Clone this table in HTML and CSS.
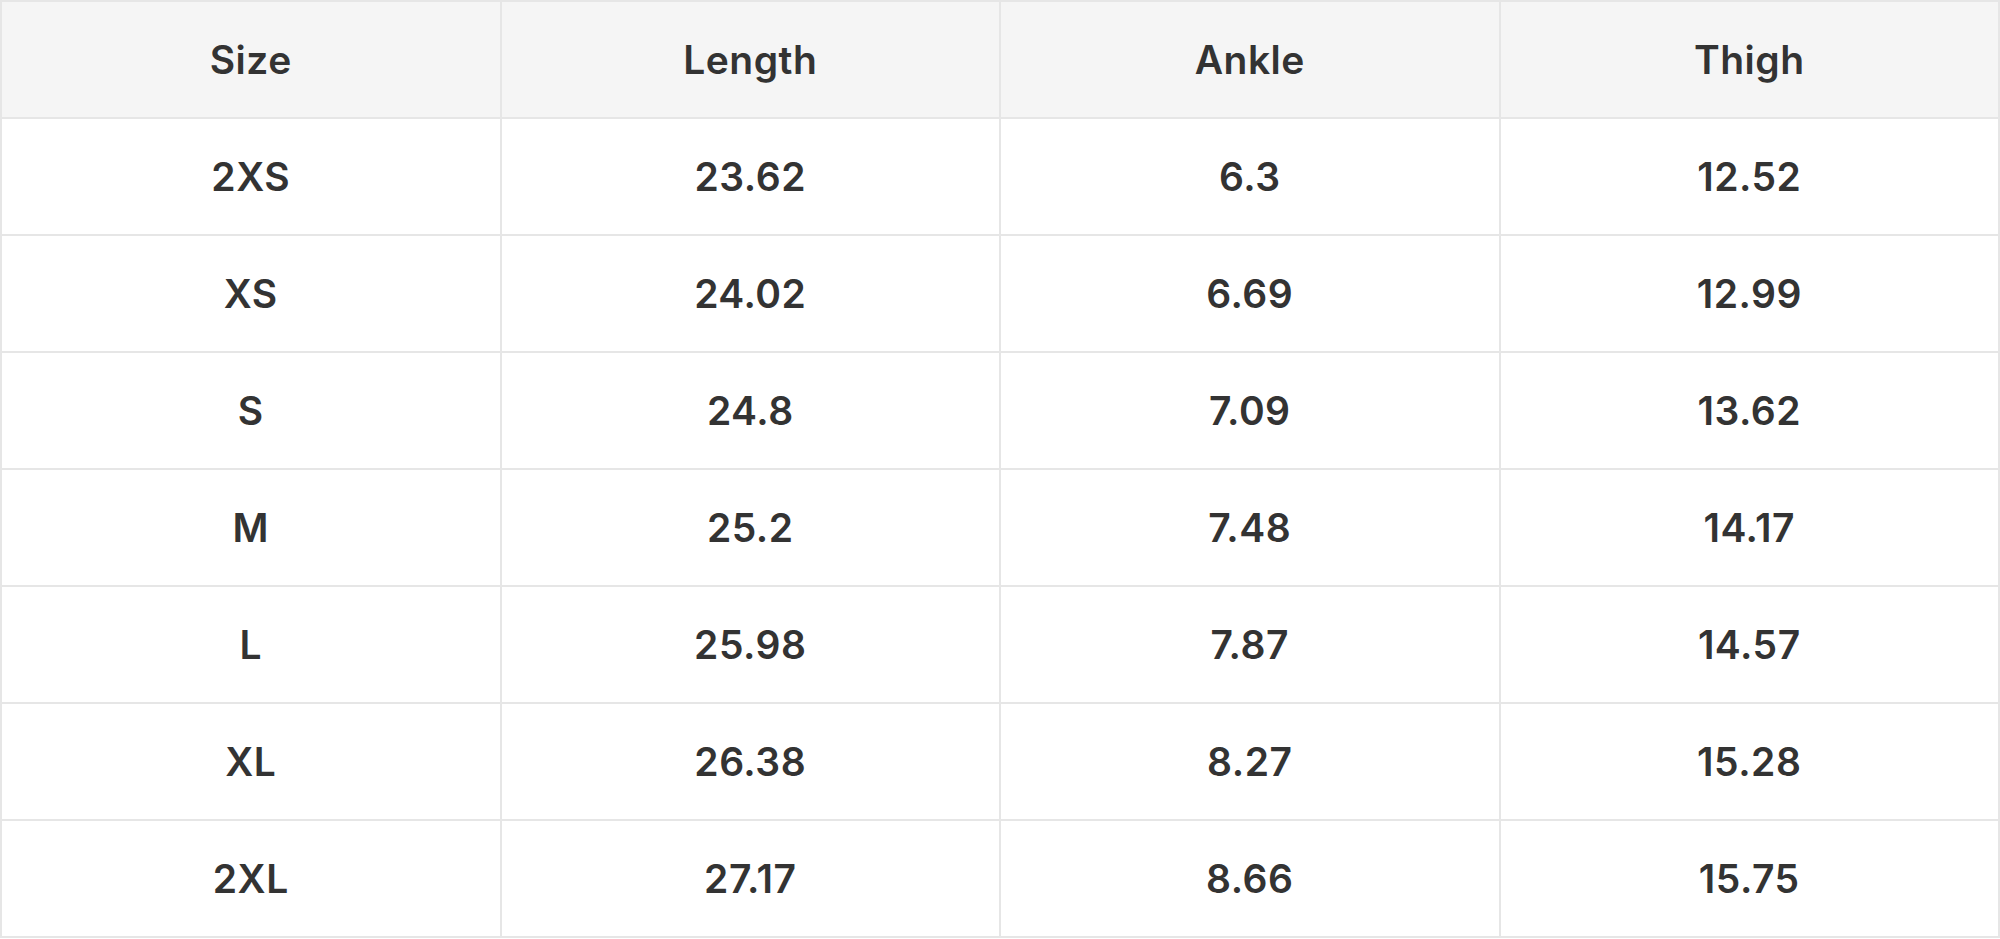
FILE: index.html
```html
<!DOCTYPE html>
<html>
<head>
<meta charset="utf-8">
<link rel="stylesheet" href="styles.css">
</head>
<body>
<table class="size-table">
  <thead>
    <tr><th>Size</th><th>Length</th><th>Ankle</th><th>Thigh</th></tr>
  </thead>
  <tbody>
    <tr><td>2XS</td><td>23.62</td><td>6.3</td><td>12.52</td></tr>
    <tr><td>XS</td><td>24.02</td><td>6.69</td><td>12.99</td></tr>
    <tr><td>S</td><td>24.8</td><td>7.09</td><td>13.62</td></tr>
    <tr><td>M</td><td>25.2</td><td>7.48</td><td>14.17</td></tr>
    <tr><td>L</td><td>25.98</td><td>7.87</td><td>14.57</td></tr>
    <tr><td>XL</td><td>26.38</td><td>8.27</td><td>15.28</td></tr>
    <tr><td>2XL</td><td>27.17</td><td>8.66</td><td>15.75</td></tr>
  </tbody>
</table>
</body>
</html>
```

FILE: styles.css
```css
html, body {
  margin: 0;
  padding: 0;
  background: #ffffff;
}
body {
  font-family: "Inter", "Liberation Sans", sans-serif;
  color: #333333;
}
.size-table {
  width: 2000px;
  border-collapse: collapse;
  table-layout: fixed;
}
.size-table th,
.size-table td {
  border: 2px solid #e6e6e6;
  height: 117px;
  padding: 0;
  text-align: center;
  vertical-align: middle;
  font-size: 39px;
  font-weight: 600;
  letter-spacing: 0.5px;
  box-sizing: border-box;
}
.size-table th {
  background: #f5f5f5;
}
```
